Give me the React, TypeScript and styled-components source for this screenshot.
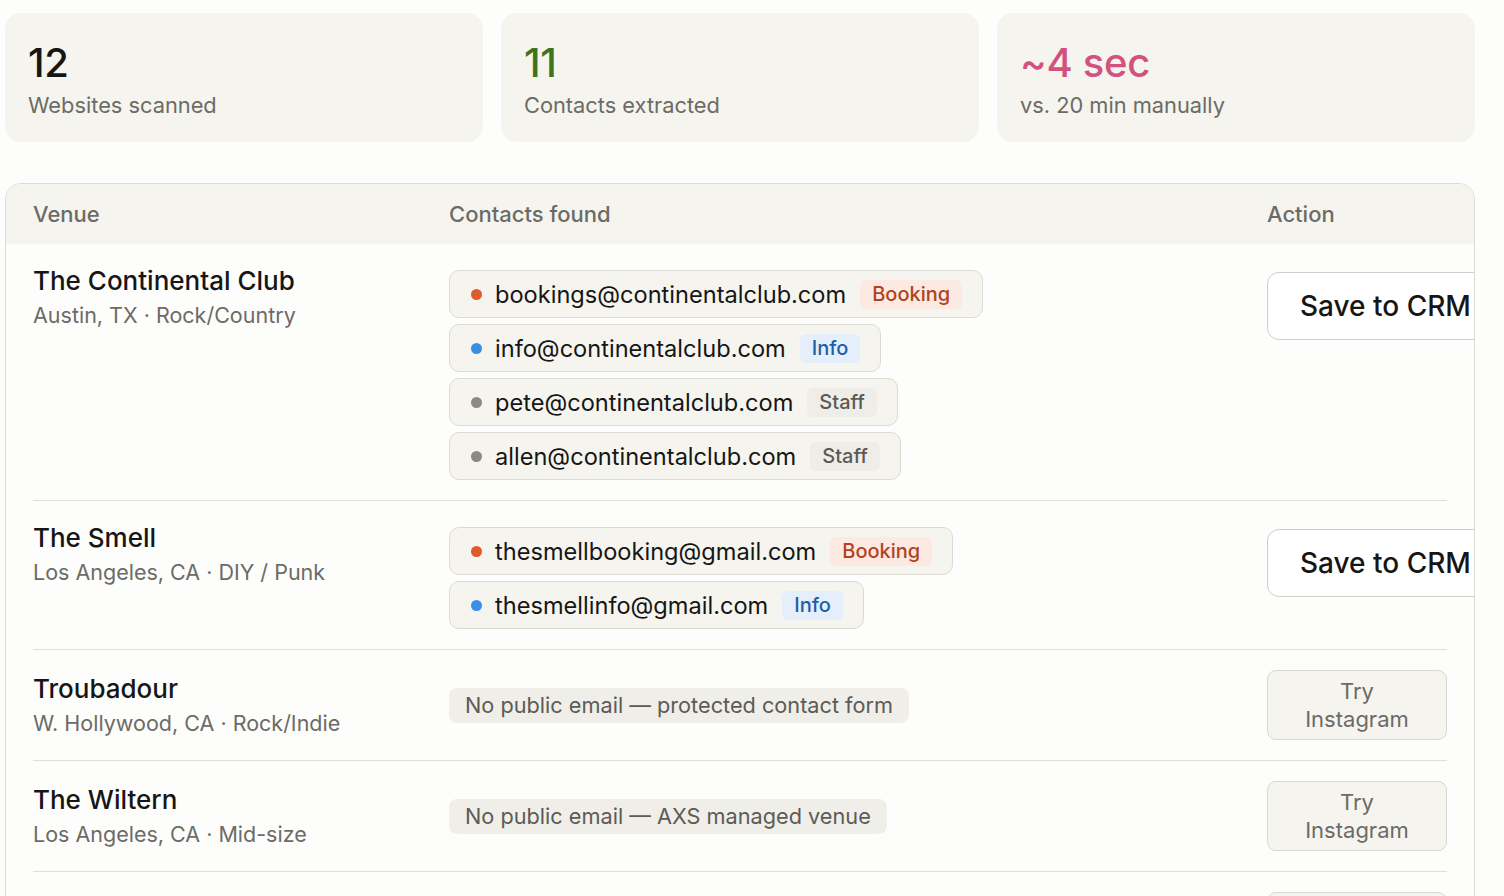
import React from 'react';
import styled, { createGlobalStyle } from 'styled-components';

type Tag = 'booking' | 'info' | 'staff';

interface Contact {
  email: string;
  tag: Tag;
}

interface Venue {
  name: string;
  meta: string;
  contacts: Contact[];
  note?: string;
}

const tagLabel: Record<Tag, string> = {
  booking: 'Booking',
  info: 'Info',
  staff: 'Staff',
};

const tagColors: Record<Tag, { dot: string; bg: string; fg: string }> = {
  booking: { dot: '#e05a2c', bg: '#fbe9e2', fg: '#b2431d' },
  info: { dot: '#3a8ee3', bg: '#e5effb', fg: '#1f5ea6' },
  staff: { dot: '#8b8985', bg: '#eeede8', fg: '#5b5a56' },
};

const stats = [
  { value: '12', label: 'Websites scanned', color: '#161616' },
  { value: '11', label: 'Contacts extracted', color: '#3e7420' },
  { value: '~4 sec', label: 'vs. 20 min manually', color: '#d2527d' },
];

const venues: Venue[] = [
  {
    name: 'The Continental Club',
    meta: 'Austin, TX · Rock/Country',
    contacts: [
      { email: 'bookings@continentalclub.com', tag: 'booking' },
      { email: 'info@continentalclub.com', tag: 'info' },
      { email: 'pete@continentalclub.com', tag: 'staff' },
      { email: 'allen@continentalclub.com', tag: 'staff' },
    ],
  },
  {
    name: 'The Smell',
    meta: 'Los Angeles, CA · DIY / Punk',
    contacts: [
      { email: 'thesmellbooking@gmail.com', tag: 'booking' },
      { email: 'thesmellinfo@gmail.com', tag: 'info' },
    ],
  },
  {
    name: 'Troubadour',
    meta: 'W. Hollywood, CA · Rock/Indie',
    contacts: [],
    note: 'No public email — protected contact form',
  },
  {
    name: 'The Wiltern',
    meta: 'Los Angeles, CA · Mid-size',
    contacts: [],
    note: 'No public email — AXS managed venue',
  },
  {
    name: 'The Echo',
    meta: 'Los Angeles, CA · Indie',
    contacts: [],
    note: 'No public email — contact form only',
  },
];

const App = () => (
  <>
    <GlobalStyle />
    <Page>
      <StatGrid>
        {stats.map((s) => (
          <StatCard key={s.label}>
            <StatValue $color={s.color}>{s.value}</StatValue>
            <StatLabel>{s.label}</StatLabel>
          </StatCard>
        ))}
      </StatGrid>

      <Table>
        <HeaderRow>
          <span>Venue</span>
          <span>Contacts found</span>
          <span>Action</span>
        </HeaderRow>
        <Body>
          {venues.map((v) => {
            const hasEmail = v.contacts.length > 0;
            return (
              <Row key={v.name} $centered={!hasEmail}>
                <VenueCell>
                  <VenueName>{v.name}</VenueName>
                  <VenueMeta>{v.meta}</VenueMeta>
                </VenueCell>
                {hasEmail ? (
                  <ContactList>
                    {v.contacts.map((c) => (
                      <ContactPill key={c.email}>
                        <Dot $color={tagColors[c.tag].dot} />
                        <Email>{c.email}</Email>
                        <Badge $bg={tagColors[c.tag].bg} $fg={tagColors[c.tag].fg}>
                          {tagLabel[c.tag]}
                        </Badge>
                      </ContactPill>
                    ))}
                  </ContactList>
                ) : (
                  <NotePill>{v.note}</NotePill>
                )}
                <ActionCell>
                  {hasEmail ? (
                    <SaveButton>Save to CRM</SaveButton>
                  ) : (
                    <GhostButton>Try Instagram</GhostButton>
                  )}
                </ActionCell>
              </Row>
            );
          })}
        </Body>
      </Table>
    </Page>
  </>
);

export default App;

const GlobalStyle = createGlobalStyle`
  * {
    box-sizing: border-box;
  }

  html, body {
    margin: 0;
    height: 100%;
    overflow: hidden;
    background: #fdfdfc;
  }

  body {
    font-family: Inter, "Noto Sans", "Liberation Sans", sans-serif;
    color: #161616;
  }
`;

const Page = styled.main`
  width: 1470px;
  margin: 13px 0 0 5px;
`;

const StatGrid = styled.section`
  display: grid;
  grid-template-columns: repeat(3, 1fr);
  gap: 18px;
`;

const StatCard = styled.article`
  background: #f5f4ee;
  border-radius: 16px;
  padding: 27px 23px 0;
  height: 129px;
`;

const StatValue = styled.div<{ $color: string }>`
  font-size: 40px;
  line-height: 46px;
  font-weight: 500;
  letter-spacing: -0.3px;
  color: ${(p) => p.$color};
`;

const StatLabel = styled.div`
  margin-top: 4px;
  font-size: 21.8px;
  line-height: 30px;
  color: #6c6b66;
`;

const Table = styled.section`
  margin-top: 41px;
  border: 1px solid #dddbd5;
  border-radius: 16px;
  overflow: hidden;
  background: #fdfdfc;
  height: 760px;
`;

const gridCols = '416px 1fr 180px';

const HeaderRow = styled.div`
  display: grid;
  grid-template-columns: ${gridCols};
  align-items: center;
  height: 60px;
  padding: 0 27px;
  background: #f5f4ee;
  font-size: 22px;
  font-weight: 500;
  color: #6c6b66;
`;

const Body = styled.div`
  padding: 0 27px;
`;

const Row = styled.div<{ $centered: boolean }>`
  display: grid;
  grid-template-columns: ${gridCols};
  align-items: ${(p) => (p.$centered ? 'center' : 'start')};
  padding: 20px 0;

  & + & {
    border-top: 1px solid #e0ded8;
  }
`;

const VenueCell = styled.div`
  display: flex;
  flex-direction: column;
`;

const VenueName = styled.div`
  font-size: 26px;
  line-height: 34px;
  font-weight: 500;
  color: #161616;
`;

const VenueMeta = styled.div`
  margin-top: 2px;
  font-size: 21.5px;
  line-height: 30px;
  color: #6c6b66;
`;

const ContactList = styled.div`
  display: flex;
  flex-direction: column;
  align-items: flex-start;
  gap: 6px;
  margin-top: 6px;
`;

const ContactPill = styled.div`
  display: flex;
  align-items: center;
  height: 48px;
  padding: 0 20px 0 21px;
  background: #f5f4ee;
  border: 1px solid #dcdad3;
  border-radius: 10px;
`;

const Dot = styled.span<{ $color: string }>`
  width: 11px;
  height: 11px;
  border-radius: 50%;
  background: ${(p) => p.$color};
  margin-right: 13px;
  flex-shrink: 0;
`;

const Email = styled.span`
  font-size: 23.6px;
  color: #161616;
  white-space: nowrap;
`;

const Badge = styled.span<{ $bg: string; $fg: string }>`
  margin-left: 14px;
  padding: 0 12px;
  height: 29px;
  display: inline-flex;
  align-items: center;
  border-radius: 6px;
  font-size: 20px;
  font-weight: 500;
  background: ${(p) => p.$bg};
  color: ${(p) => p.$fg};
`;

const NotePill = styled.div`
  justify-self: start;
  height: 35px;
  display: flex;
  align-items: center;
  padding: 0 16px;
  border-radius: 8px;
  background: #efeee8;
  font-size: 21.7px;
  color: #5c5b57;
  white-space: nowrap;
`;

const ActionCell = styled.div`
  display: flex;
`;

const SaveButton = styled.button`
  margin-top: 8px;
  height: 68px;
  padding: 0 32px;
  white-space: nowrap;
  background: #ffffff;
  border: 1px solid #d0cec8;
  border-radius: 12px;
  font-family: inherit;
  font-size: 28px;
  font-weight: 500;
  color: #161616;
  cursor: pointer;
`;

const GhostButton = styled.button`
  width: 180px;
  height: 70px;
  padding: 0 30px;
  background: #f5f4ee;
  border: 1px solid #d9d7d0;
  border-radius: 9px;
  font-family: inherit;
  font-size: 22px;
  line-height: 28px;
  color: #6c6b66;
  cursor: pointer;
`;
